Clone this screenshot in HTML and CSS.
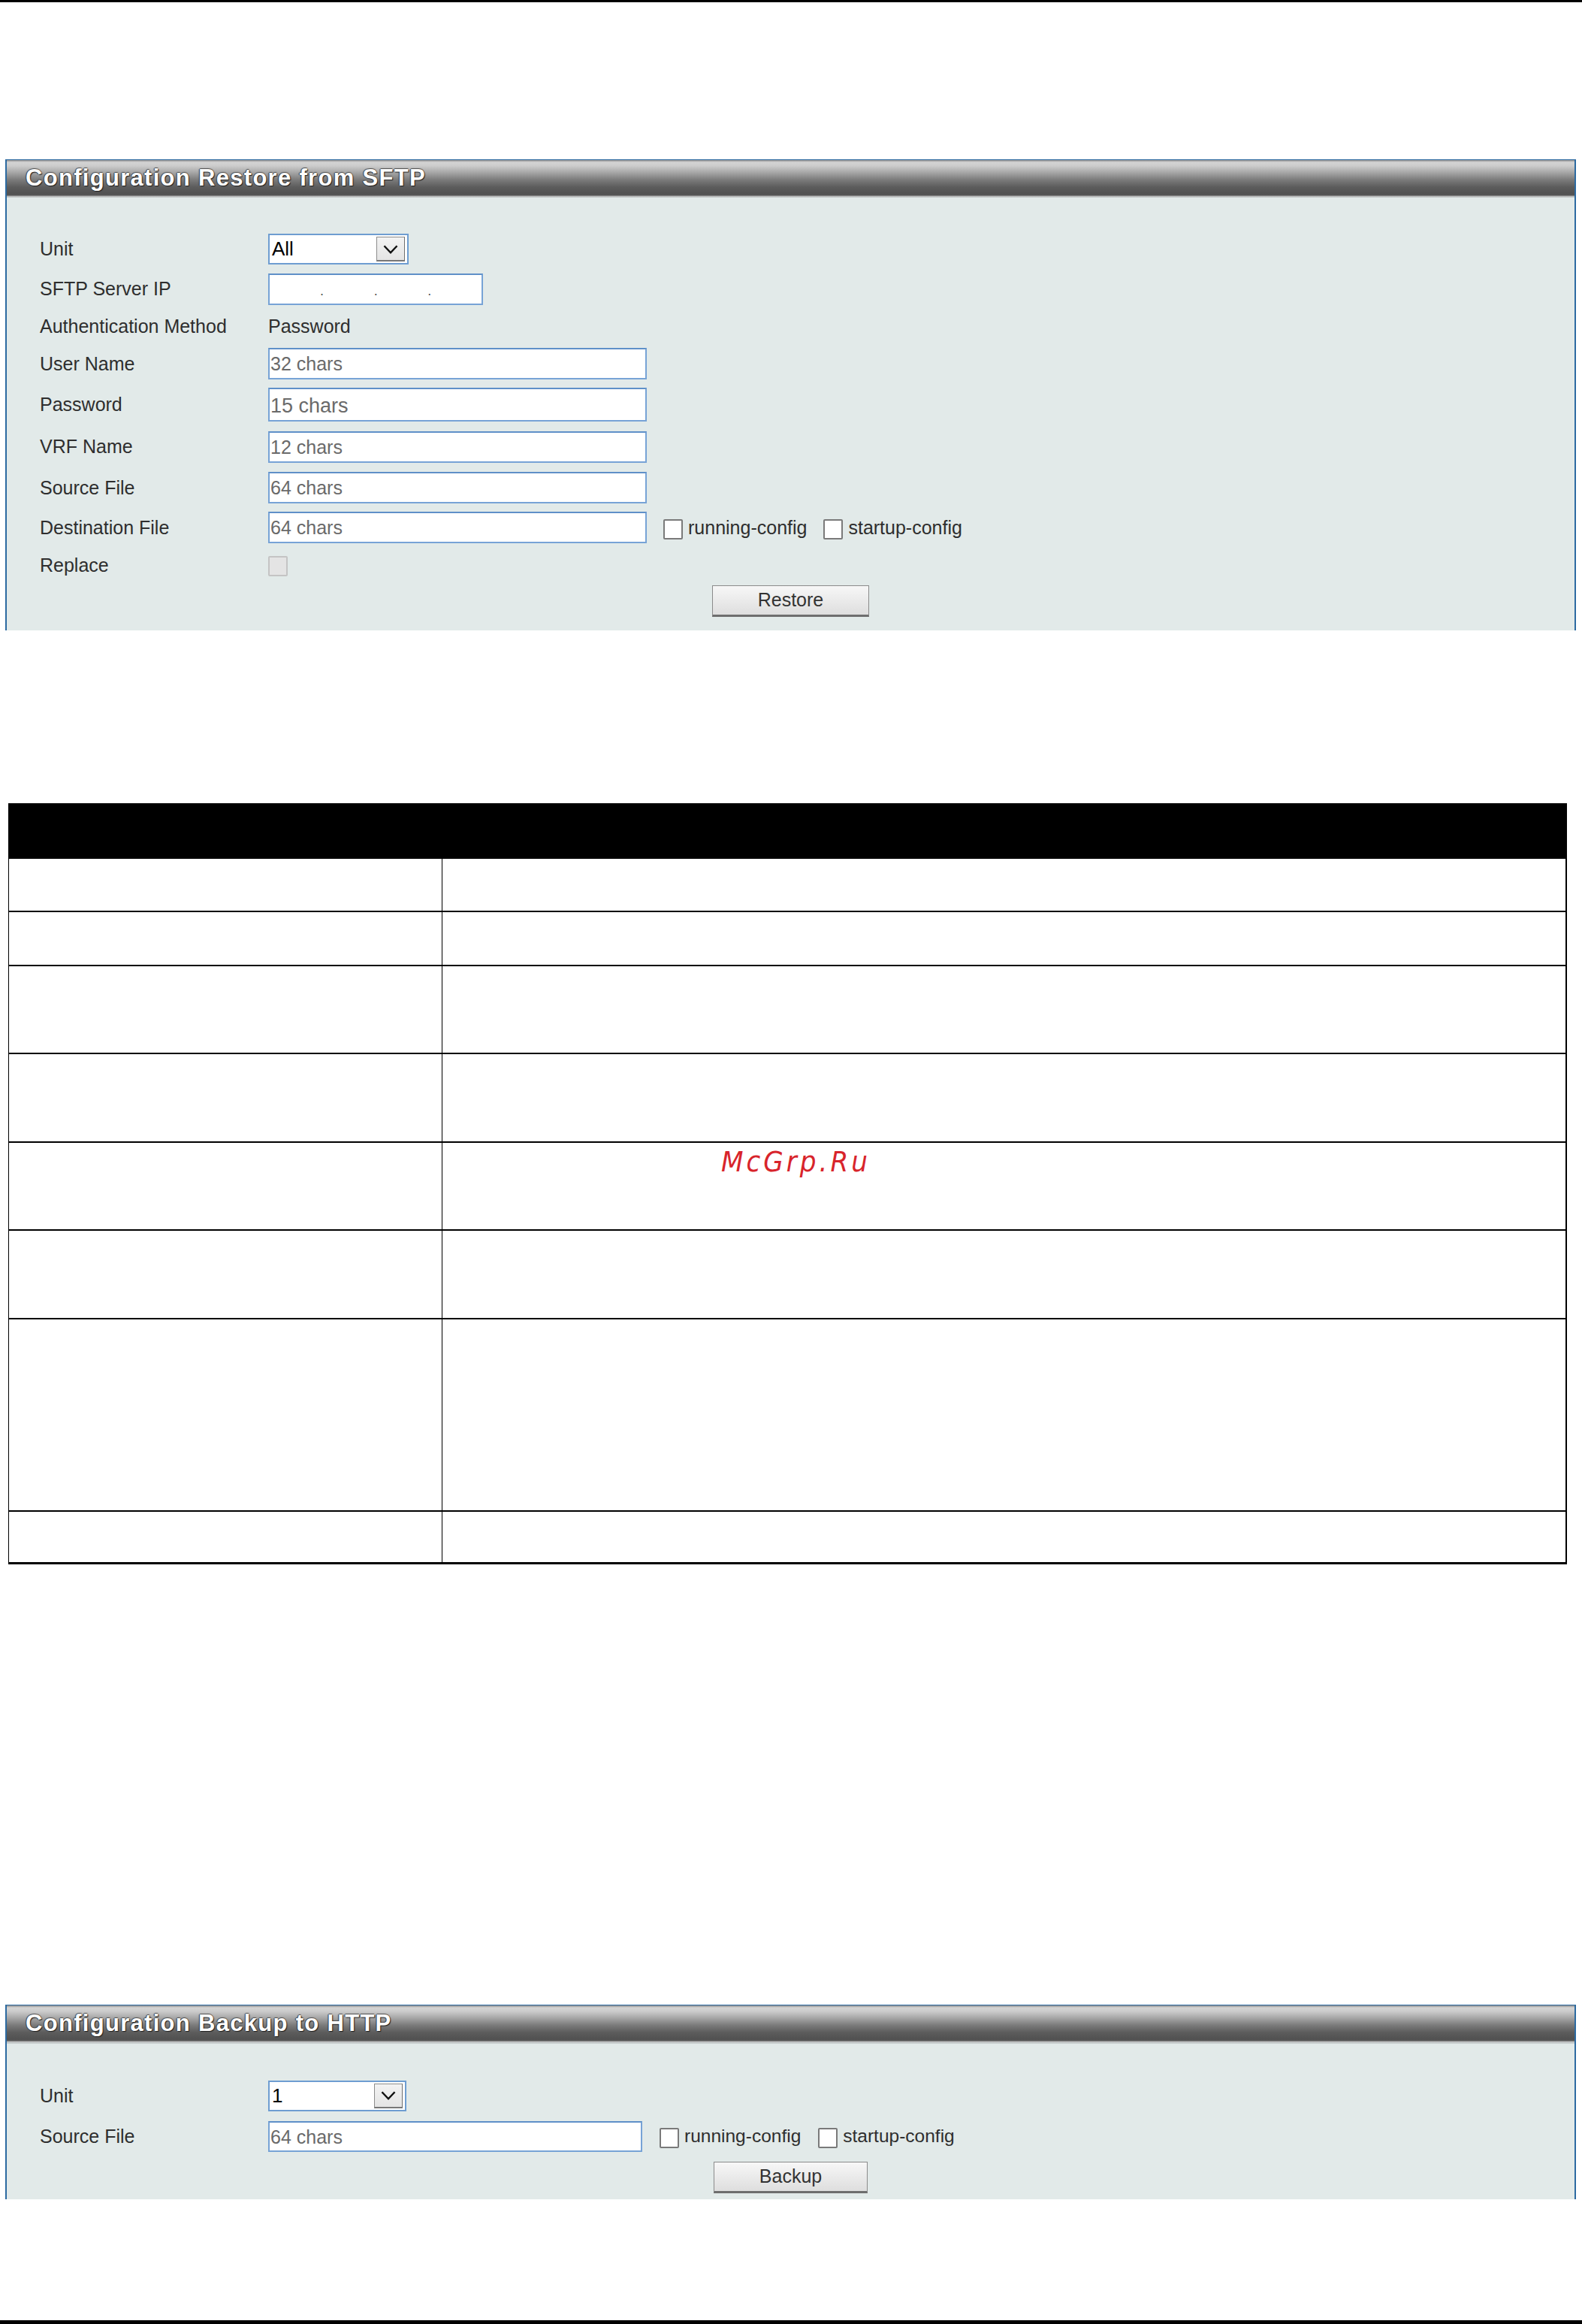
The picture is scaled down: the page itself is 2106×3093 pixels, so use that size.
FILE: index.html
```html
<!DOCTYPE html>
<html lang="en">
<head>
<meta charset="utf-8">
<title>Configuration Restore from SFTP</title>
<link rel="stylesheet" href="styles.css">
</head>
<body>
<div class="page">
  <div class="rule rule-top"></div>

  <section class="panel panel-restore">
    <div class="panel-title">Configuration Restore from SFTP</div>
    <div class="panel-body">
      <div class="row h55">
        <div class="lbl">Unit</div>
        <div class="select sel-a"><span class="sel-text">All</span><span class="arrow"><svg viewBox="0 0 38 33" width="38" height="33"><path d="M10 12 L19 21.5 L28 12" fill="none" stroke="#111" stroke-width="2.6"/></svg></span></div>
      </div>
      <div class="row h51">
        <div class="lbl">SFTP Server IP</div>
        <div class="field ip"><span class="dot">.</span><span class="dot">.</span><span class="dot">.</span></div>
      </div>
      <div class="row h48">
        <div class="lbl">Authentication Method</div>
        <div class="val">Password</div>
      </div>
      <div class="row h52">
        <div class="lbl">User Name</div>
        <div class="field wide">32 chars</div>
      </div>
      <div class="row h57">
        <div class="lbl">Password</div>
        <div class="field wide pwd">15 chars</div>
      </div>
      <div class="row h55">
        <div class="lbl">VRF Name</div>
        <div class="field wide">12 chars</div>
      </div>
      <div class="row h54">
        <div class="lbl">Source File</div>
        <div class="field wide">64 chars</div>
      </div>
      <div class="row h52">
        <div class="lbl">Destination File</div>
        <div class="field wide">64 chars</div>
        <span class="cb cb-first"></span><span class="cb-text">running-config</span>
        <span class="cb cb-next"></span><span class="cb-text">startup-config</span>
      </div>
      <div class="row h48">
        <div class="lbl">Replace</div>
        <span class="cb cb-disabled"></span>
      </div>
      <div class="row h47 center">
        <div class="btn btn-restore">Restore</div>
      </div>
    </div>
  </section>

  <div class="params">
    <div class="p-head"></div>
    <div class="p-cell p-left"></div><div class="p-cell"></div>
    <div class="p-cell p-left"></div><div class="p-cell"></div>
    <div class="p-cell p-left"></div><div class="p-cell"></div>
    <div class="p-cell p-left"></div><div class="p-cell"></div>
    <div class="p-cell p-left"></div><div class="p-cell"></div>
    <div class="p-cell p-left"></div><div class="p-cell"></div>
    <div class="p-cell p-left"></div><div class="p-cell"></div>
    <div class="p-cell p-left p-last"></div><div class="p-cell p-last"></div>
  </div>

  <div class="watermark">McGrp.Ru</div>

  <section class="panel panel-backup">
    <div class="panel-title t51">Configuration Backup to HTTP</div>
    <div class="panel-body b2">
      <div class="row h54">
        <div class="lbl">Unit</div>
        <div class="select sel-b"><span class="sel-text">1</span><span class="arrow"><svg viewBox="0 0 38 33" width="38" height="33"><path d="M10 12 L19 21.5 L28 12" fill="none" stroke="#111" stroke-width="2.6"/></svg></span></div>
      </div>
      <div class="row h54">
        <div class="lbl">Source File</div>
        <div class="field wide2">64 chars</div>
        <span class="cb cb-first2"></span><span class="cb-text t2">running-config</span>
        <span class="cb cb-next2"></span><span class="cb-text t2">startup-config</span>
      </div>
      <div class="row h55 center">
        <div class="btn btn-backup">Backup</div>
      </div>
    </div>
  </section>

  <div class="rule rule-bottom"></div>
</div>
</body>
</html>
```

FILE: styles.css
```css
html, body {
  margin: 0;
  padding: 0;
  background: #ffffff;
}

body {
  font-family: "Liberation Sans", Arial, sans-serif;
  color: #333333;
}

.page {
  position: relative;
  width: 2106px;
  height: 3093px;
  overflow: hidden;
}

.rule {
  background: #000000;
  width: 100%;
}

.rule-top {
  height: 3px;
}

.rule-bottom {
  height: 5px;
  margin-top: 161px;
}

/* ---------- panels ---------- */
.panel {
  box-sizing: border-box;
  width: 2091px;
  margin-left: 7px;
  border-top: 1px solid #2c6aa1;
  border-left: 2px solid #2c6aa1;
  border-right: 2px solid #2c6aa1;
  background: #e2eae9;
}

.panel-restore {
  margin-top: 209px;
}

.panel-backup {
  margin-top: 586px;
}

.panel-title {
  height: 50px;
  box-sizing: border-box;
  padding: 0 0 2px 25px;
  line-height: 48px;
  font-size: 31px;
  font-weight: bold;
  letter-spacing: 1.3px;
  color: #ffffff;
  text-shadow: 1px 1px 1px #1e1e1e, -1px 0 1px #3a3a3a, 0 -1px 1px #505050;
  background: linear-gradient(to bottom,
    #8a8a8a 0px,
    #d4d4d4 3px,
    #cbcbcb 8px,
    #a9a9a9 16px,
    #7c7c7c 26px,
    #5c5c5c 36px,
    #525252 44px,
    #555555 47px,
    #b4b4b4 48px,
    #c9cfcf 50px);
}

.panel-title.t51 {
  height: 51px;
}

.panel-body {
  padding: 41px 0 16px 0;
}

.panel-body.b2 {
  padding: 42px 0 2px 0;
}

.row {
  display: flex;
  align-items: center;
  box-sizing: border-box;
}

.row.center {
  justify-content: center;
}

.h47 { height: 47px; }
.h48 { height: 48px; }
.h51 { height: 51px; }
.h52 { height: 52px; }
.h54 { height: 54px; }
.h55 { height: 55px; }
.h57 { height: 57px; }

.lbl {
  width: 304px;
  margin-left: 44px;
  flex: none;
  font-size: 25px;
  color: #2e2e2e;
  white-space: nowrap;
}

.val {
  font-size: 25px;
  color: #2e2e2e;
}

/* select look-alike */
.select {
  position: relative;
  box-sizing: border-box;
  height: 41px;
  border: 2px solid #6e9dd1;
  background: #ffffff;
  display: flex;
  align-items: center;
}

.sel-a { width: 187px; }
.sel-b { width: 184px; }

.sel-text {
  font-size: 26px;
  color: #000000;
  padding-left: 3px;
  flex: 1;
}

.arrow {
  box-sizing: border-box;
  width: 38px;
  height: 33px;
  margin-right: 3px;
  border: 1px solid #8c8c8c;
  border-right-color: #6f6f6f;
  border-bottom: 2px solid #777777;
  background: linear-gradient(#f3f3f3, #e4e4e4);
  display: flex;
  align-items: center;
  justify-content: center;
}

.arrow svg {
  display: block;
}

/* text fields */
.field {
  box-sizing: border-box;
  height: 42px;
  border: 2px solid #77a3d6;
  border-top-color: #5f90c8;
  background: #ffffff;
  font-size: 25px;
  color: #6a6a6a;
  line-height: 38px;
  padding-left: 1px;
  white-space: nowrap;
}

.field.wide { width: 504px; }
.field.wide2 { width: 498px; height: 41px; }
.field.pwd {
  height: 45px;
  font-size: 27px;
  line-height: 44px;
}

.field.ip {
  width: 286px;
  display: flex;
  align-items: center;
  padding-left: 67px;
}

.dot {
  font-size: 18px;
  color: #555555;
  width: 73px;
  line-height: 18px;
  position: relative;
  top: 2px;
}

/* checkboxes */
.cb {
  box-sizing: border-box;
  width: 26px;
  height: 27px;
  border: 2px solid #7a7a7a;
  border-radius: 2px;
  background: #ffffff;
  flex: none;
  position: relative;
  top: 2px;
}

.cb-first { margin-left: 22px; }
.cb-next { margin-left: 22px; }
.cb-first2 { margin-left: 23px; }
.cb-next2 { margin-left: 23px; }

.cb-disabled {
  border: 2px solid #c4c4c4;
  background: #e4e4e4;
  top: 1px;
}

.cb-text {
  font-size: 25px;
  color: #2e2e2e;
  margin-left: 7px;
  white-space: nowrap;
}

.cb-text.t2 {
  font-size: 24.5px;
}

/* buttons */
.btn {
  box-sizing: border-box;
  height: 42px;
  border: 1px solid #8b8b8b;
  border-bottom: 3px solid #6e6e6e;
  background: linear-gradient(#f7f7f7, #dedede);
  font-size: 25px;
  color: #333333;
  display: flex;
  align-items: center;
  justify-content: center;
}

.btn-restore { width: 209px; }
.btn-backup { width: 205px; }

/* parameter table */
.params {
  box-sizing: border-box;
  margin-top: 230px;
  margin-left: 11px;
  width: 2075px;
  display: grid;
  grid-template-columns: 577px 1fr;
  grid-template-rows: 74px 71px 72px 117px 118px 117px 118px 256px 70px;
  border-left: 1px solid #000000;
  border-right: 2px solid #000000;
}

.p-head {
  grid-column: 1 / 3;
  background: #000000;
}

.p-cell {
  box-sizing: border-box;
  border-bottom: 2px solid #000000;
  background: #ffffff;
}

.p-left {
  border-right: 1px solid #000000;
}

.p-last {
  border-bottom-width: 3px;
}

/* watermark overlay */
.watermark {
  position: absolute;
  left: 960px;
  top: 1524px;
  font-family: "DejaVu Sans Condensed", "DejaVu Sans", sans-serif;
  font-style: italic;
  font-size: 38px;
  letter-spacing: 4px;
  color: #d8242b;
  white-space: nowrap;
}
```
